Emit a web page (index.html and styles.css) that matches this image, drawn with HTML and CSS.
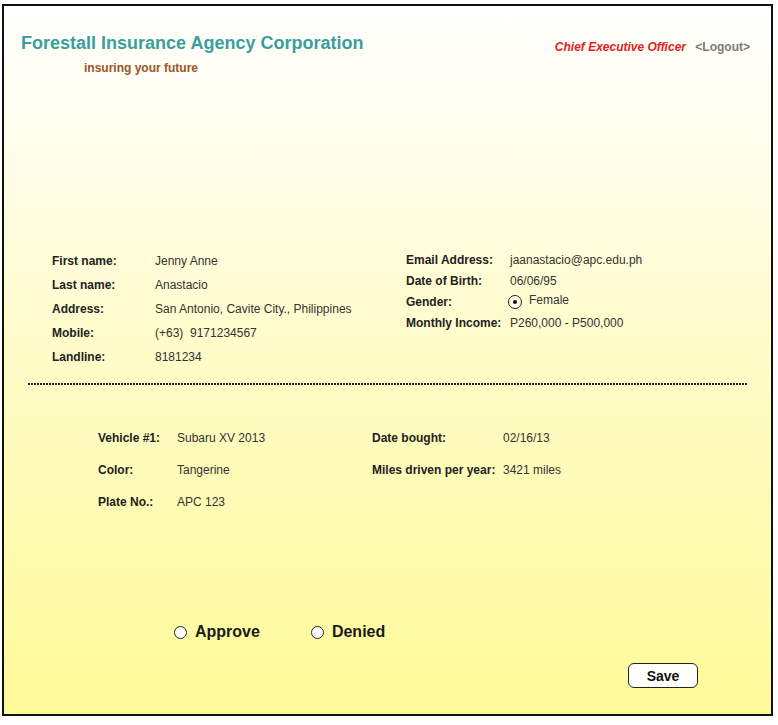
FILE: index.html
```html
<!DOCTYPE html>
<html>
<head>
<meta charset="utf-8">
<link rel="stylesheet" href="styles.css">
</head>
<body>
<div class="frame">
  <header class="header">
    <div class="brand">
      <div class="title">Forestall Insurance Agency Corporation</div>
      <div class="tagline">insuring your future</div>
    </div>
    <div class="user">
      <span class="role">Chief Executive Officer</span>
      <span class="logout">&lt;Logout&gt;</span>
    </div>
  </header>

  <section class="personal">
    <div class="grid grid-left">
      <div class="label">First name:</div><div class="value">Jenny Anne</div>
      <div class="label">Last name:</div><div class="value">Anastacio</div>
      <div class="label">Address:</div><div class="value">San Antonio, Cavite City., Philippines</div>
      <div class="label">Mobile:</div><div class="value">(+63)&nbsp;&nbsp;9171234567</div>
      <div class="label">Landline:</div><div class="value">8181234</div>
    </div>
    <div class="grid grid-right">
      <div class="label">Email Address:</div><div class="value">jaanastacio@apc.edu.ph</div>
      <div class="label">Date of Birth:</div><div class="value">06/06/95</div>
      <div class="label">Gender:</div><div class="value gender"><span class="radio-sel"></span>Female</div>
      <div class="label">Monthly Income:</div><div class="value">P260,000 - P500,000</div>
    </div>
  </section>

  <div class="divider"></div>

  <section class="vehicle">
    <div class="grid vgrid-left">
      <div class="label">Vehicle #1:</div><div class="value">Subaru XV 2013</div>
      <div class="label">Color:</div><div class="value">Tangerine</div>
      <div class="label">Plate No.:</div><div class="value">APC 123</div>
    </div>
    <div class="grid vgrid-right">
      <div class="label">Date bought:</div><div class="value">02/16/13</div>
      <div class="label">Miles driven per year:</div><div class="value">3421 miles</div>
    </div>
  </section>

  <section class="decision">
    <label class="choice"><span class="radio"></span>Approve</label>
    <label class="choice"><span class="radio"></span>Denied</label>
  </section>

  <div class="actions">
    <button class="save">Save</button>
  </div>
</div>
</body>
</html>
```

FILE: styles.css
```css
html, body {
  margin: 0;
  padding: 0;
  background: #ffffff;
}

body {
  font-family: "Liberation Sans", Arial, sans-serif;
}

.frame {
  margin: 4px 0 0 2px;
  width: 771px;
  height: 712px;
  box-sizing: border-box;
  border: 2px solid #111;
  background: linear-gradient(to bottom, #fffffd 0%, #fffdeb 20%, #fffcc8 50%, #fffa98 100%);
  padding-top: 26px;
}

.header {
  display: flex;
  justify-content: space-between;
  align-items: flex-start;
  padding: 0 21px 0 17px;
}

.title {
  font-size: 18px;
  font-weight: bold;
  line-height: 22px;
  color: #3b9e9e;
}

.tagline {
  margin: 6px 0 0 63px;
  font-size: 12px;
  font-weight: bold;
  line-height: 16px;
  color: #9a5626;
}

.user {
  margin-top: 7px;
  font-size: 12px;
  font-weight: bold;
  line-height: 16px;
}

.role {
  color: #e02222;
  font-style: italic;
  margin-right: 6px;
}

.logout {
  color: #7a7a7a;
}

.personal {
  display: flex;
  align-items: flex-start;
  margin-top: 173px;
  padding-left: 48px;
}

.grid {
  display: grid;
  font-size: 12px;
}

.label {
  font-weight: bold;
  color: #222;
}

.value {
  color: #333;
}

.grid-left {
  width: 354px;
  grid-template-columns: 103px auto;
  grid-auto-rows: 24px;
  line-height: 24px;
}

.grid-right {
  margin-top: 1px;
  grid-template-columns: 104px auto;
  grid-auto-rows: 21px;
  line-height: 21px;
}

.gender {
  display: flex;
  align-items: center;
  line-height: 17px;
  align-self: start;
}

.radio-sel {
  width: 14px;
  height: 14px;
  box-sizing: border-box;
  border: 1.5px solid #222;
  border-radius: 50%;
  margin: 2px 7px 0 -2px;
  position: relative;
  background: #fffde8;
}

.radio-sel::after {
  content: "";
  position: absolute;
  left: 50%;
  top: 50%;
  width: 4px;
  height: 4px;
  margin: -2px 0 0 -2px;
  border-radius: 50%;
  background: #111;
}

.divider {
  margin: 14px 0 0 24px;
  width: 719px;
  height: 2px;
  background: repeating-linear-gradient(to right, #222 0 2px, transparent 2px 3px);
}

.vehicle {
  display: flex;
  align-items: flex-start;
  margin-top: 37px;
  padding-left: 94px;
}

.vgrid-left {
  width: 274px;
  grid-template-columns: 79px auto;
  grid-auto-rows: 32px;
  line-height: 32px;
}

.vgrid-right {
  grid-template-columns: 131px auto;
  grid-auto-rows: 32px;
  line-height: 32px;
}

.decision {
  display: flex;
  gap: 51px;
  margin-top: 104px;
  padding-left: 170px;
  line-height: 20px;
}

.choice {
  display: flex;
  align-items: center;
  font-size: 16px;
  font-weight: bold;
  color: #1a1a1a;
}

.radio {
  width: 13px;
  height: 13px;
  box-sizing: border-box;
  border: 1.5px solid #222;
  border-radius: 50%;
  background: #fff;
  margin-right: 8px;
}

.actions {
  display: flex;
  justify-content: flex-end;
  margin-top: 21px;
  padding-right: 73px;
}

.save {
  width: 70px;
  height: 25px;
  border: 1px solid #222;
  border-radius: 6px;
  background: #fffffa;
  font-family: "Liberation Sans", Arial, sans-serif;
  font-size: 14px;
  font-weight: bold;
  color: #111;
  padding: 0;
}
```
